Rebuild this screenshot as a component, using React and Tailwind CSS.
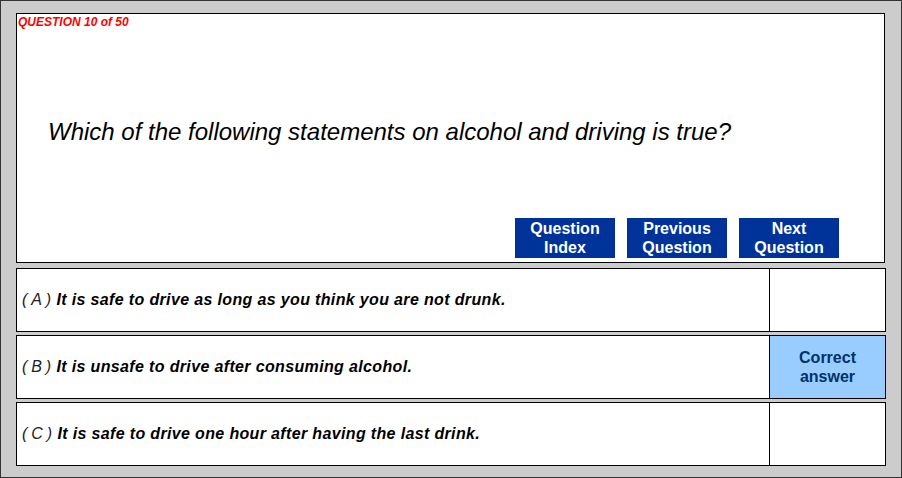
import React from 'react';

const answers = [
    { key: 'A', text: 'It is safe to drive as long as you think you are not drunk.', correct: false },
    { key: 'B', text: 'It is unsafe to drive after consuming alcohol.', correct: true },
    { key: 'C', text: 'It is safe to drive one hour after having the last drink.', correct: false },
];

const NavButton = ({ top, bottom }) => (
    <button className="w-[100px] h-[40px] bg-[#003399] text-white font-bold text-[16px] leading-[19px] flex flex-col items-center justify-center">
        <span>{top}</span>
        <span>{bottom}</span>
    </button>
);

const App = () => {
    return (
        <div className="w-[902px] h-[478px] bg-[#cccccc] border border-[#333333] pl-[15px] pt-[12px] pr-[16px] font-['Liberation_Sans',Arial,sans-serif]">
            {/* question panel */}
            <div className="h-[250px] bg-white border border-black flex flex-col">
                <div className="pl-[1px] pt-[2px] text-[12px] leading-[13px] font-bold italic text-[#ff0000]">
                    QUESTION 10 of 50
                </div>
                <div className="mt-[90px] pl-[31px] text-[24px] leading-[26px] italic text-black">
                    Which of the following statements on alcohol and driving is true?
                </div>
                <div className="flex-1" />
                <div className="flex justify-end gap-[12px] pr-[45px] pb-[4px]">
                    <NavButton top="Question" bottom="Index" />
                    <NavButton top="Previous" bottom="Question" />
                    <NavButton top="Next" bottom="Question" />
                </div>
            </div>

            {/* answers */}
            <div className="mt-[5px] flex flex-col gap-[3px]">
                {answers.map(a => (
                    <div key={a.key} className="h-[64px] bg-white border border-black flex w-[870px]">
                        <div className="flex-1 flex items-center pl-[5px] text-[16px] tracking-[0.35px] italic text-black">
                            <span className="font-normal text-[#222222]">(&thinsp;{a.key}&thinsp;)</span>
                            <span className="font-bold ml-[5px]">{a.text}</span>
                        </div>
                        <div className={`w-[116px] border-l border-black flex items-center justify-center text-center font-bold text-[16px] leading-[19px] text-[#003366] ${a.correct ? 'bg-[#99ccff]' : 'bg-white'}`}>
                            {a.correct && <span>Correct<br />answer</span>}
                        </div>
                    </div>
                ))}
            </div>
        </div>
    );
};

export default App;
